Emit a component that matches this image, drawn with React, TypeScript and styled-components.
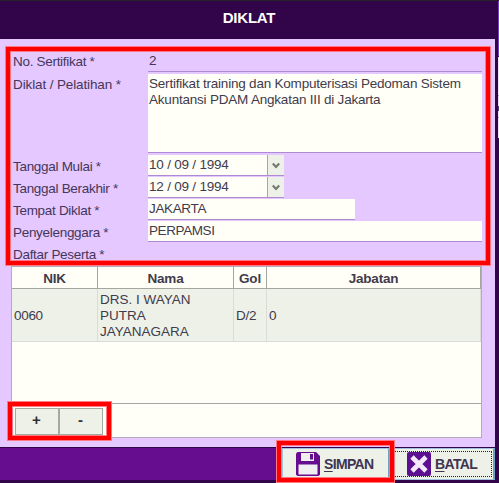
import React from "react";
import styled, { createGlobalStyle } from "styled-components";

const GlobalStyle = createGlobalStyle`
  * { box-sizing: border-box; }
  body {
    margin: 0;
    overflow: hidden;
    font: 13.5px/16px "Liberation Sans", Arial, sans-serif;
    letter-spacing: -0.21px;
    color: #44365a;
  }
`;

const Page = styled.div`
  display: flex;
  width: 499px;
  height: 483px;
`;

const Dialog = styled.div`
  position: relative;
  display: flex;
  flex-direction: column;
  width: 498px;
  height: 483px;
  background: #e4c8ff;
`;

const Backdrop = styled.div`
  width: 1px;
  background: linear-gradient(
    #32054b 0 1px, #7c3fc0 1px 56px, #32054b 56px 57px, #f0e6fa 57px 95px,
    #a79bb4 95px 96px, #e9dcf5 96px 106px, #4c3d70 106px 111px, #f0e6fa 111px 117px,
    #a79bb4 117px 118px, #efe3fa 118px 138px, #32054b 138px
  );
`;

const TitleBar = styled.header`
  height: 39px;
  flex: none;
  padding-top: 8px;
  border-top: 1px solid #262029;
  background: #32054b;
  color: #fff;
  font-size: 15px;
  line-height: 17px;
  font-weight: bold;
  text-align: center;
`;

const Body = styled.main`
  height: 408px;
  flex: none;
  padding: 8px 4px 0 6px;
  border-right: 3px solid #32054b;
`;

const Form = styled.form`
  width: 484px;
  height: 218px;
  padding: 1px 4px 0 3px;
  border: 4px solid #ff0000;
  box-shadow: 0 0 0 1px #ff7884, inset 0 0 0 1px #ff7884;
`;

const Row = styled.div<{ $height?: number }>`
  display: grid;
  grid-template-columns: 135px 334px;
  height: ${(p) => p.$height ?? 22}px;
`;

const Label = styled.label<{ $drop?: number; $track?: number }>`
  padding-top: ${(p) => p.$drop ?? 4}px;
  white-space: nowrap;
  letter-spacing: ${(p) => p.$track ?? -0.3}px;
`;

const Field = styled.div<{ $width?: number; $height?: number; $plain?: boolean; $track?: number }>`
  width: ${(p) => p.$width ?? 334}px;
  height: ${(p) => p.$height ?? 21}px;
  padding: ${(p) => (p.$plain ? 1 : 2)}px 1px 0;
  background: ${(p) => (p.$plain ? "transparent" : "#fffff8")};
  border-bottom: 1px solid #ae8ad4;
  white-space: pre;
  color: ${(p) => (p.$plain ? "#44365a" : "#413b4b")};
  letter-spacing: ${(p) => p.$track ?? -0.21}px;
`;

const DateField = styled(Field)`
  display: flex;
  justify-content: space-between;
  padding: 0 0 0 1px;
`;

const DateText = styled.span`
  padding-top: 2px;
`;

const Arrow = styled.span`
  display: grid;
  place-items: center;
  width: 17px;
  border-left: 1px solid #a5aaa0;
  background: #edf1e8;
`;

const Grid = styled.section`
  display: flex;
  flex-direction: column;
  width: 471px;
  height: 172px;
  margin: 1px 0 0 5px;
  border: 1px solid #b3abb9;
  background: #fffff8;
  color: #413b4b;
`;

const GridRow = styled.div<{ $head?: boolean }>`
  display: grid;
  grid-template-columns: 86px 136px 33px 214px;
  height: ${(p) => (p.$head ? 22 : 53)}px;
  flex: none;
  background: ${(p) => (p.$head ? "#fffff8" : "#edf1e8")};
`;

const HeadCell = styled.div`
  padding-top: 4px;
  border-right: 1px solid #a5a69f;
  border-bottom: 1px solid #a5a69f;
  font-weight: bold;
  text-align: center;
`;

const Cell = styled.div<{ $track?: number }>`
  display: flex;
  align-items: center;
  padding: 1px 2px 0;
  border-right: 1px solid #d9ddd5;
  border-bottom: 1px solid #d9ddd5;
  letter-spacing: ${(p) => p.$track ?? -0.3}px;
`;

const GridTools = styled.div`
  display: flex;
  height: 34px;
  margin-top: auto;
  padding: 4px 3px;
  border-top: 1px solid #a5a69f;
`;

const ToolButton = styled.button`
  width: 44px;
  height: 27px;
  padding: 0 1px 4px 0;
  border: 1px solid #a5aaa0;
  background: #edf1e8;
  color: #303030;
  font: bold 15px "Liberation Sans", Arial, sans-serif;
`;

const ActionBar = styled.footer`
  display: flex;
  justify-content: flex-end;
  height: 36px;
  flex: none;
  background: #660d8f;
  border-top: 1px solid #32054b;
  border-bottom: 3px solid #32054b;
  border-right: 3px solid #32054b;
`;

const ActionButton = styled.button<{ $focus?: boolean }>`
  display: flex;
  align-items: center;
  gap: 4px;
  width: ${(p) => (p.$focus ? 105 : 108)}px;
  height: 32px;
  padding: 0 0 1px ${(p) => (p.$focus ? 16 : 13)}px;
  border: 1px solid #9fc3e0;
  border-right: 2px solid #6fa3c4;
  background: #edf1e8;
  color: #403450;
  font: bold 14px/16px "Liberation Sans", Arial, sans-serif;
  outline: ${(p) => (p.$focus ? "1px dotted #222" : "none")};
  outline-offset: -4px;
`;

const Caption = styled.span`
  letter-spacing: -0.65px;
  u { text-decoration-thickness: 1px; text-underline-offset: 2px; }
`;

const Highlight = styled.div<{ $x: number; $y: number; $w: number; $h: number }>`
  position: absolute;
  left: ${(p) => p.$x}px;
  top: ${(p) => p.$y}px;
  width: ${(p) => p.$w}px;
  height: ${(p) => p.$h}px;
  border: 4px solid #ff0000;
  box-shadow: 0 0 0 1px #ff7884, inset 0 0 0 1px #ff7884;
  pointer-events: none;
`;

const Chevron = () => (
  <svg width="8" height="7" viewBox="0 0 8 7">
    <path d="M0.8 1.4 4 4.9 7.2 1.4" fill="none" stroke="#747a70" strokeWidth="2.2" />
  </svg>
);

const DiskIcon = () => (
  <svg width="24" height="24" viewBox="0 0 24 24">
    <path d="M1.5 0H20L24 4V22.5L22.5 24H1.5L0 22.5V1.5Z" fill="#660d8f" />
    <path d="M5 1H18V9H5ZM2.5 12.5H21.5V22.5H2.5Z" fill="#f1eef2" />
    <path d="M14 2h3v5.5h-3Z" fill="#660d8f" />
  </svg>
);

const CrossIcon = () => (
  <svg width="24" height="24" viewBox="0 0 24 24">
    <rect width="24" height="24" rx="2" fill="#5d0f91" />
    <path d="M5 5 19 19M19 5 5 19" stroke="#f3e9fb" strokeWidth="4.6" />
  </svg>
);

export default function App() {
  return (
    <Page>
      <GlobalStyle />
      <Dialog>
        <TitleBar>DIKLAT</TitleBar>
        <Body>
          <Form>
            <Row $height={22}>
              <Label $drop={2}>No. Sertifikat *</Label>
              <Field $plain $height={20}>2</Field>
            </Row>
            <Row $height={81}>
              <Label $drop={3} $track={-0.12}>Diklat / Pelatihan *</Label>
              <Field $height={79}>{"Sertifikat training dan Komputerisasi Pedoman Sistem\nAkuntansi PDAM Angkatan III di Jakarta"}</Field>
            </Row>
            <Row>
              <Label>Tanggal Mulai *</Label>
              <DateField $width={136}>
                <DateText>10 / 09 / 1994</DateText>
                <Arrow><Chevron /></Arrow>
              </DateField>
            </Row>
            <Row>
              <Label>Tanggal Berakhir *</Label>
              <DateField $width={136}>
                <DateText>12 / 09 / 1994</DateText>
                <Arrow><Chevron /></Arrow>
              </DateField>
            </Row>
            <Row>
              <Label>Tempat Diklat *</Label>
              <Field $width={207} $track={-0.35}>JAKARTA</Field>
            </Row>
            <Row>
              <Label>Penyelenggara *</Label>
              <Field $track={-0.4}>PERPAMSI</Field>
            </Row>
            <Row $height={16}>
              <Label>Daftar Peserta *</Label>
            </Row>
          </Form>
          <Grid>
            <GridRow $head>
              <HeadCell>NIK</HeadCell>
              <HeadCell>Nama</HeadCell>
              <HeadCell>Gol</HeadCell>
              <HeadCell>Jabatan</HeadCell>
            </GridRow>
            <GridRow>
              <Cell>0060</Cell>
              <Cell $track={0}>DRS. I WAYAN<br />PUTRA<br />JAYANAGARA</Cell>
              <Cell>D/2</Cell>
              <Cell>0</Cell>
            </GridRow>
            <GridTools>
              <ToolButton>+</ToolButton>
              <ToolButton>-</ToolButton>
            </GridTools>
          </Grid>
        </Body>
        <ActionBar>
          <ActionButton>
            <DiskIcon />
            <Caption><u>S</u>IMPAN</Caption>
          </ActionButton>
          <ActionButton $focus>
            <CrossIcon />
            <Caption><u>B</u>ATAL</Caption>
          </ActionButton>
        </ActionBar>
        <Highlight $x={8} $y={402} $w={103} $h={38} />
        <Highlight $x={277} $y={441} $w={117} $h={41} />
      </Dialog>
      <Backdrop />
    </Page>
  );
}
